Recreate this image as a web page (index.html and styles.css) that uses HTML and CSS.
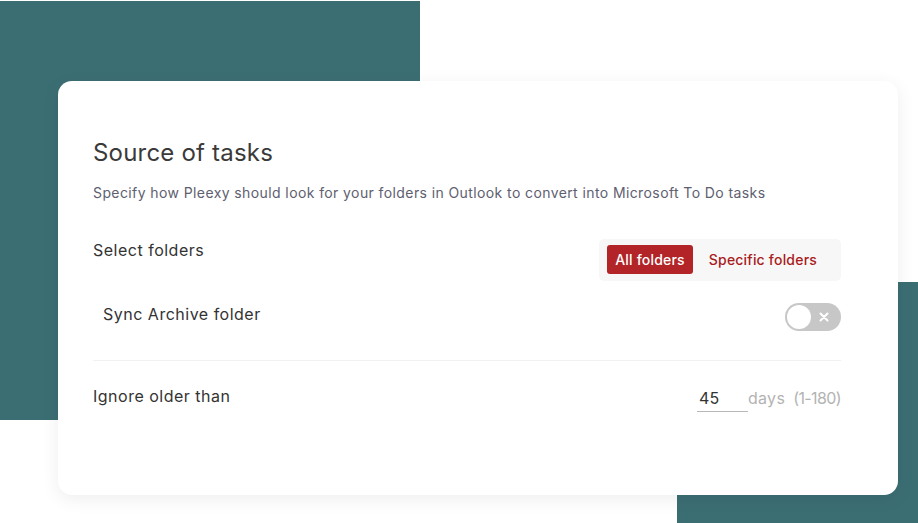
FILE: index.html
```html
<!DOCTYPE html>
<html lang="en">
<head>
<meta charset="utf-8">
<title>Source of tasks</title>
<link rel="stylesheet" href="styles.css">
</head>
<body>
<div class="stage">
  <div class="deco deco-top"></div>
  <div class="deco deco-bottom"></div>
  <section class="card">
    <h1 class="title">Source of tasks</h1>
    <p class="subtitle">Specify how Pleexy should look for your folders in Outlook to convert into Microsoft To Do tasks</p>
    <div class="row row-select">
      <span class="label">Select folders</span>
      <div class="segment">
        <button class="seg-btn seg-active">All folders</button>
        <button class="seg-btn seg-plain">Specific folders</button>
      </div>
    </div>
    <div class="row row-sync">
      <span class="label label-indent">Sync Archive folder</span>
      <div class="toggle">
        <span class="knob"></span>
        <svg class="toggle-x" width="10" height="10" viewBox="0 0 10 10"><path d="M1.5 1.5 L8.5 8.5 M8.5 1.5 L1.5 8.5" stroke="#fff" stroke-width="2" stroke-linecap="round"/></svg>
      </div>
    </div>
    <div class="divider"></div>
    <div class="row row-ignore">
      <span class="label">Ignore older than</span>
      <div class="days">
        <span class="num-input">45</span>
        <span class="muted">days</span>
        <span class="muted range">(1-180)</span>
      </div>
    </div>
  </section>
</div>
</body>
</html>
```
FILE: styles.css
```css
* { box-sizing: border-box; }
html, body { margin: 0; padding: 0; }
body {
  width: 918px;
  height: 523px;
  overflow: hidden;
  background: #ffffff;
  font-family: Inter, "Noto Sans", sans-serif;
  color: #333333;
}
.stage {
  position: relative;
  width: 918px;
  height: 523px;
  padding: 81px 20px 0 58px;
}
.deco {
  position: absolute;
  background: #3b6e73;
}
.deco-top { left: 0; top: 1px; width: 420px; height: 419px; }
.deco-bottom { left: 677px; top: 282px; width: 241px; height: 241px; }
.card {
  position: relative;
  width: 840px;
  height: 414px;
  background: #ffffff;
  border-radius: 14px;
  box-shadow: 0 4px 18px rgba(0, 0, 0, 0.07);
  padding: 57px 57px 0 35px;
  display: flex;
  flex-direction: column;
}
.title {
  margin: 0;
  font-size: 24px;
  line-height: 30px;
  font-weight: 400;
  letter-spacing: 0.2px;
  color: #3a3a3a;
}
.subtitle {
  margin: 15px 0 0;
  font-size: 14px;
  line-height: 20px;
  letter-spacing: 0.4px;
  color: #5e6070;
}
.row {
  display: flex;
  justify-content: space-between;
  align-items: flex-start;
}
.row-select { margin-top: 36px; }
.row-sync { margin-top: 22px; }
.row-ignore { margin-top: 24px; }
.label {
  font-size: 16px;
  line-height: 22px;
  font-weight: 400;
  letter-spacing: 0.5px;
  color: #333333;
}
.label-indent { padding-left: 10px; }
.segment {
  display: flex;
  background: #f7f7f7;
  border-radius: 5px;
  padding: 6px 8px 7px;
}
.seg-btn {
  font-family: inherit;
  font-size: 14px;
  font-weight: 500;
  letter-spacing: 0.2px;
  height: 29px;
  border: none;
  border-radius: 3px;
  cursor: pointer;
}
.seg-active {
  background: #b22427;
  color: #ffffff;
  padding: 0 8px;
}
.seg-plain {
  background: transparent;
  color: #a91b20;
  padding: 0 16px;
}
.toggle {
  width: 56px;
  height: 28px;
  border-radius: 14px;
  background: #c7c7c7;
  display: flex;
  align-items: center;
  justify-content: space-between;
  padding: 0 12px 0 2px;
}
.knob {
  width: 24px;
  height: 24px;
  border-radius: 50%;
  background: #ffffff;
}
.divider {
  margin-top: 29px;
  height: 1px;
  background: #f1f1f1;
}
.days {
  display: flex;
  align-items: baseline;
  font-size: 16px;
  line-height: 22px;
  letter-spacing: 0.3px;
  padding-top: 2px;
}
.num-input {
  width: 51px;
  padding: 0 0 2px 2px;
  border-bottom: 1px solid #b8b8b8;
  color: #333333;
}
.muted { color: #b3b3b3; }
.range { margin-left: 8px; letter-spacing: -0.6px; }
```
